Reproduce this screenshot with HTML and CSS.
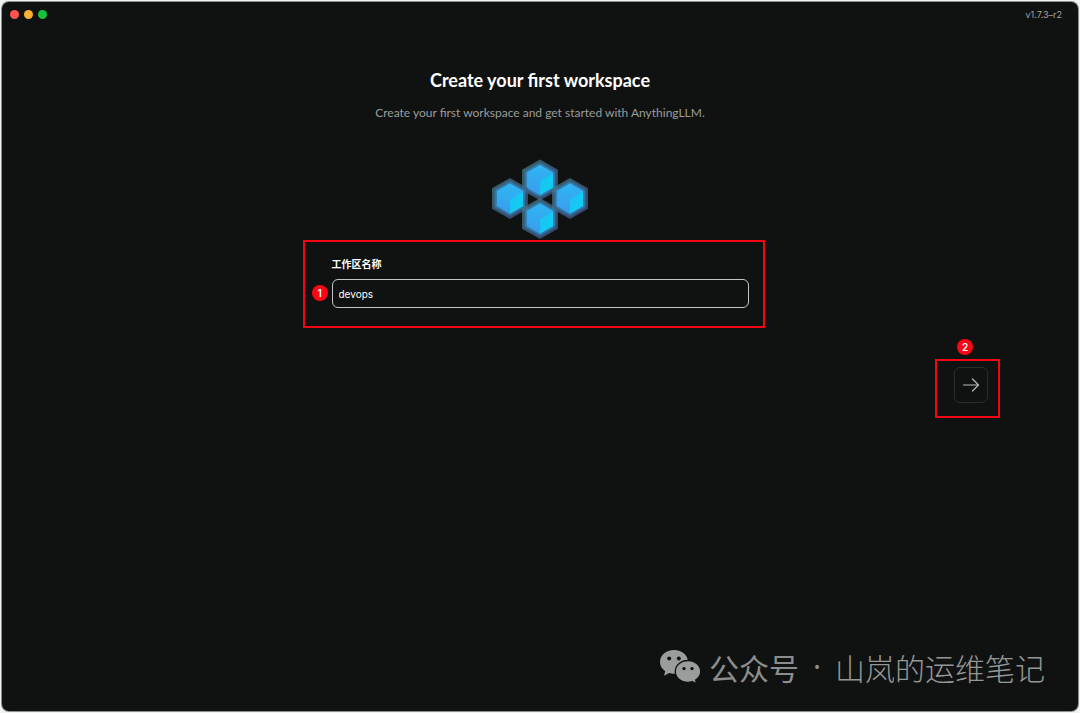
FILE: index.html
```html
<!DOCTYPE html>
<html lang="zh-CN">
<head>
<meta charset="utf-8">
<meta name="viewport" content="width=device-width, initial-scale=1">
<title>AnythingLLM</title>
<link rel="stylesheet" href="styles.css">
</head>
<body>
<div class="window">
  <header class="titlebar">
    <div class="lights">
      <span class="light light-close"></span>
      <span class="light light-min"></span>
      <span class="light light-max"></span>
    </div>
    <span class="version">v1.7.3–r2</span>
  </header>
  <main class="stage">
    <div class="content">
      <h1 class="title">Create your first workspace</h1>
      <p class="subtitle">Create your first workspace and get started with AnythingLLM.</p>
      <svg class="logo" viewBox="0 0 98 80" aria-hidden="true">
        <defs>
          <linearGradient id="shell" x1="0" y1="0" x2="1" y2="1">
            <stop offset="0" stop-color="#467c82"/>
            <stop offset="1" stop-color="#414f8c"/>
          </linearGradient>
          <linearGradient id="body" x1="0" y1="0" x2="0" y2="1">
            <stop offset="0" stop-color="#2fb6f3"/>
            <stop offset="1" stop-color="#3a9cee"/>
          </linearGradient>
          <linearGradient id="side" x1="0" y1="0" x2="1" y2="1">
            <stop offset="0" stop-color="#22bdf5"/>
            <stop offset="1" stop-color="#08d4ee"/>
          </linearGradient>
          <filter id="soft" x="-20%" y="-20%" width="140%" height="140%">
            <feGaussianBlur stdDeviation="1.2"/>
          </filter>
          <filter id="edge" x="-20%" y="-20%" width="140%" height="140%">
            <feGaussianBlur stdDeviation=".7"/>
          </filter>
          <g id="cube">
            <path d="M0-20.5 18-10.3V10.3L0 20.5-18 10.3V-10.3Z" fill="url(#shell)" fill-opacity=".75"/>
            <path d="M0-17 15-8.500V8.500L0 17-15 8.500V-8.500Z" fill="#3486bd" filter="url(#soft)"/>
            <path d="M0-15 13-7.5V7.5L0 15-13 7.5V-7.5Z" fill="url(#body)" filter="url(#edge)"/>
            <path d="M0 1 13-7V7.5L0 15Z" fill="url(#side)" filter="url(#edge)"/>
          </g>
        </defs>
        <use href="#cube" x="49" y="21"/>
        <use href="#cube" x="19" y="39.5"/>
        <use href="#cube" x="79" y="39.5"/>
        <use href="#cube" x="49" y="59.5"/>
      </svg>
      <form class="form" id="workspace-form">
        <label class="label" for="name">工作区名称</label>
        <input class="field" id="name" type="text" value="devops">
        <span class="frame frame-form"></span>
        <span class="step step-form">1</span>
      </form>
    </div>
    <div class="next-wrap">
      <button class="next" type="submit" form="workspace-form" aria-label="Next">
        <svg class="arrow" viewBox="0 0 18 18" aria-hidden="true"><path d="M1.500 9h15M10.500 3l6 6-6 6"/></svg>
      </button>
      <span class="frame frame-next"></span>
      <span class="step step-next">2</span>
    </div>
  </main>
  <footer class="watermark">
    <svg class="wechat" viewBox="0 0 42 36" aria-hidden="true">
      <path d="M15 1C7 1 1 6.300 1 13c0 3.800 2 7 5.200 9.200L5 26.800l5.200-2.700c1.500.5 3.100.7 4.800.7 8 0 14-5.200 14-11.900S23 1 15 1Z"/>
      <path class="front" d="M29 11.500c-7.200 0-12.700 4.800-12.700 11S21.800 33.300 29 33.300c1.600 0 3-.2 4.400-.7l4.300 2.300-1.100-3.900c3.100-2 5.100-5 5.100-8.500 0-6.200-5.500-11-12.700-11Z"/>
      <g class="eyes"><circle cx="10.200" cy="9.600" r="2"/><circle cx="19.800" cy="9.600" r="2"/><circle cx="25" cy="19.600" r="1.700"/><circle cx="33" cy="19.600" r="1.700"/></g>
    </svg>
    <span class="source">公众号</span><span class="dot">·</span><span class="author">山岚的运维笔记</span>
  </footer>
</div>
</body>
</html>
```
FILE: styles.css
```css
* { box-sizing: border-box; }

body {
  margin: 0;
  padding: 2px;
  min-height: 100vh;
  display: flex;
  background: #f1f3f2;
  font-family: "Lato", "Noto Sans CJK SC", sans-serif;
  color: #fff;
}

.window {
  position: relative;
  flex: 1;
  display: flex;
  flex-direction: column;
  background: #101211;
  border-radius: 7px;
  box-shadow: 0 0 0 1px #8c908e;
}

.titlebar {
  display: flex;
  justify-content: space-between;
  align-items: center;
  height: 25px;
  padding: 0 16px 0 8px;
}

.lights { display: flex; gap: 5px; }
.light { width: 9px; height: 9px; border-radius: 50%; }
.light-close { background: #ff5350; }
.light-min { background: #fdb034; }
.light-max { background: #18c13d; }

.version { font-family: "Inter", sans-serif; font-size: 9px; color: #a4a6a5; }

.stage {
  display: grid;
  grid-template-columns: 1fr minmax(0, 417px) 1fr;
}

.content {
  grid-column: 2;
  display: flex;
  flex-direction: column;
  align-items: center;
  padding-top: 41px;
}

.title {
  margin: 0;
  font-size: 18px;
  line-height: 24px;
  font-weight: 700;
  white-space: nowrap;
}

.subtitle {
  margin: 10px 0 0;
  font-size: 12px;
  line-height: 22px;
  color: #9a9c9b;
  white-space: nowrap;
}

.logo { width: 98px; height: 80px; margin-top: 35px; }

.form {
  position: relative;
  width: 100%;
  display: flex;
  flex-direction: column;
  margin-top: 16px;
}

.label {
  font-size: 10px;
  line-height: 18px;
  font-weight: 700;
}

.field {
  width: 100%;
  height: 29px;
  margin-top: 6px;
  padding: 0 6px;
  border: 1px solid #c4c6c5;
  border-radius: 6px;
  background: transparent;
  color: #fff;
  font-family: "Inter", sans-serif;
  font-size: 10px;
  outline: none;
}

.frame {
  position: absolute;
  border: 2px solid #f30613;
  pointer-events: none;
}

.frame-form { inset: -15px -16px -20px -29px; }

.step {
  position: absolute;
  width: 16px;
  height: 16px;
  border-radius: 50%;
  background: #fb0615;
  font-family: "Inter", sans-serif;
  font-size: 10px;
  line-height: 16px;
  font-weight: 600;
  text-align: center;
}

.step-form { left: -20px; bottom: 7px; }

.next-wrap {
  position: relative;
  justify-self: end;
  align-self: end;
  margin: 0 90px -95px 0;
}

.next {
  display: flex;
  align-items: center;
  justify-content: center;
  width: 34px;
  height: 36px;
  padding: 0;
  border: 1px solid #2b2d2c;
  border-radius: 6px;
  background: #101211;
}

.arrow {
  width: 18px;
  height: 18px;
  fill: none;
  stroke: #b7b9b8;
  stroke-width: 1.2;
  stroke-linecap: round;
  stroke-linejoin: round;
}

.frame-next { inset: -8px -12px -15px -19px; }
.step-next { left: 3px; top: -28px; }

.watermark {
  position: absolute;
  right: 33px;
  bottom: 20px;
  display: flex;
  align-items: center;
  color: #8b8d8c;
  font-family: "Noto Sans CJK SC", sans-serif;
  font-size: 30px;
  line-height: 48px;
}

.wechat { width: 42px; height: 36px; margin-right: 8px; fill: #9b9d9c; }
.front { stroke: #101211; stroke-width: 1.3; }
.eyes { fill: #101211; }
.dot { width: 36px; font-family: "Noto Sans", sans-serif; text-align: center; }
.author { font-weight: 300; color: #969897; }
```
